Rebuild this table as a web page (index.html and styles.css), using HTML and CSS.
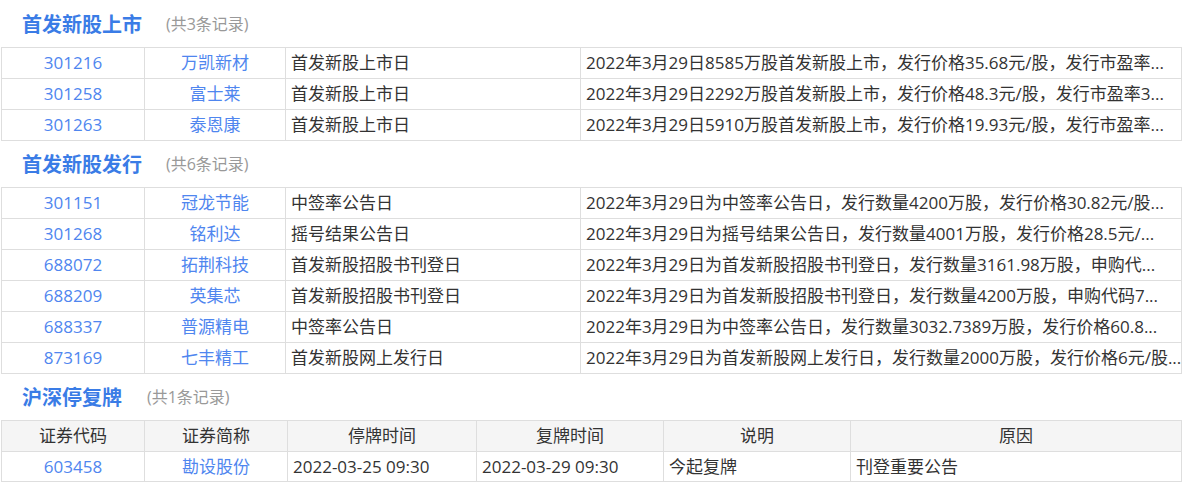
FILE: index.html
```html
<!DOCTYPE html>
<html lang="zh-CN">
<head>
<meta charset="utf-8">
<title>新股日历</title>
<link rel="stylesheet" href="styles.css">
</head>
<body>
<div class="page">
  <section class="block">
    <div class="head"><h2 class="title">首发新股上市</h2><span class="count">(共3条记录)</span></div>
    <table class="grid">
      <colgroup><col class="c1"><col class="c2"><col class="c3"><col></colgroup>
      <tbody>
        <tr><td class="ctr link">301216</td><td class="ctr link">万凯新材</td><td>首发新股上市日</td><td>2022年3月29日8585万股首发新股上市，发行价格35.68元/股，发行市盈率...</td></tr>
        <tr><td class="ctr link">301258</td><td class="ctr link">富士莱</td><td>首发新股上市日</td><td>2022年3月29日2292万股首发新股上市，发行价格48.3元/股，发行市盈率3...</td></tr>
        <tr><td class="ctr link">301263</td><td class="ctr link">泰恩康</td><td>首发新股上市日</td><td>2022年3月29日5910万股首发新股上市，发行价格19.93元/股，发行市盈率...</td></tr>
      </tbody>
    </table>
  </section>
  <section class="block">
    <div class="head"><h2 class="title">首发新股发行</h2><span class="count">(共6条记录)</span></div>
    <table class="grid">
      <colgroup><col class="c1"><col class="c2"><col class="c3"><col></colgroup>
      <tbody>
        <tr><td class="ctr link">301151</td><td class="ctr link">冠龙节能</td><td>中签率公告日</td><td>2022年3月29日为中签率公告日，发行数量4200万股，发行价格30.82元/股...</td></tr>
        <tr><td class="ctr link">301268</td><td class="ctr link">铭利达</td><td>摇号结果公告日</td><td>2022年3月29日为摇号结果公告日，发行数量4001万股，发行价格28.5元/...</td></tr>
        <tr><td class="ctr link">688072</td><td class="ctr link">拓荆科技</td><td>首发新股招股书刊登日</td><td>2022年3月29日为首发新股招股书刊登日，发行数量3161.98万股，申购代...</td></tr>
        <tr><td class="ctr link">688209</td><td class="ctr link">英集芯</td><td>首发新股招股书刊登日</td><td>2022年3月29日为首发新股招股书刊登日，发行数量4200万股，申购代码7...</td></tr>
        <tr><td class="ctr link">688337</td><td class="ctr link">普源精电</td><td>中签率公告日</td><td>2022年3月29日为中签率公告日，发行数量3032.7389万股，发行价格60.8...</td></tr>
        <tr><td class="ctr link">873169</td><td class="ctr link">七丰精工</td><td>首发新股网上发行日</td><td>2022年3月29日为首发新股网上发行日，发行数量2000万股，发行价格6元/股...</td></tr>
      </tbody>
    </table>
  </section>
  <section class="block">
    <div class="head"><h2 class="title">沪深停复牌</h2><span class="count">(共1条记录)</span></div>
    <table class="grid">
      <colgroup><col class="d1"><col class="d2"><col class="d3"><col class="d4"><col class="d5"><col></colgroup>
      <thead>
        <tr><th>证券代码</th><th>证券简称</th><th>停牌时间</th><th>复牌时间</th><th>说明</th><th>原因</th></tr>
      </thead>
      <tbody>
        <tr class="short"><td class="ctr link">603458</td><td class="ctr link">勘设股份</td><td>2022-03-25 09:30</td><td>2022-03-29 09:30</td><td>今起复牌</td><td>刊登重要公告</td></tr>
      </tbody>
    </table>
  </section>
</div>
</body>
</html>
```

FILE: styles.css
```css
html, body {
  margin: 0;
  padding: 0;
  background: #ffffff;
}

body {
  font-family: "Open Sans", "Noto Sans CJK SC", sans-serif;
  color: #333333;
  font-size: 17px;
}

.page {
  width: 1181px;
  padding-left: 1px;
}

.head {
  height: 47px;
  display: flex;
  align-items: center;
  padding-left: 21px;
}

.block + .block .head {
  height: 46px;
}

.title {
  margin: 0;
  font-size: 20px;
  font-weight: 700;
  color: #3a7ce6;
  line-height: 24px;
  font-family: "Noto Sans CJK SC", sans-serif;
}

.count {
  margin-left: 24px;
  font-size: 16px;
  color: #999999;
  line-height: 20px;
}

.block:last-child .count {
  margin-left: 25px;
}

.grid {
  width: 1181px;
  border-collapse: collapse;
  table-layout: fixed;
}

.grid td,
.grid th {
  border: 1px solid #dedede;
  height: 30px;
  line-height: 30px;
  padding: 0 5px;
  font-weight: 400;
  white-space: nowrap;
  overflow: hidden;
}

.grid th {
  background: #f5f5f5;
  text-align: center;
  color: #333333;
}

.grid tr.short td {
  height: 29px;
  line-height: 29px;
}

.c1 { width: 143px; }
.c2 { width: 141px; }
.c3 { width: 295px; }

.d1 { width: 143px; }
.d2 { width: 143px; }
.d3 { width: 189px; }
.d4 { width: 187px; }
.d5 { width: 187px; }

.ctr {
  text-align: center;
}

.link {
  color: #4f86ef;
}
```
